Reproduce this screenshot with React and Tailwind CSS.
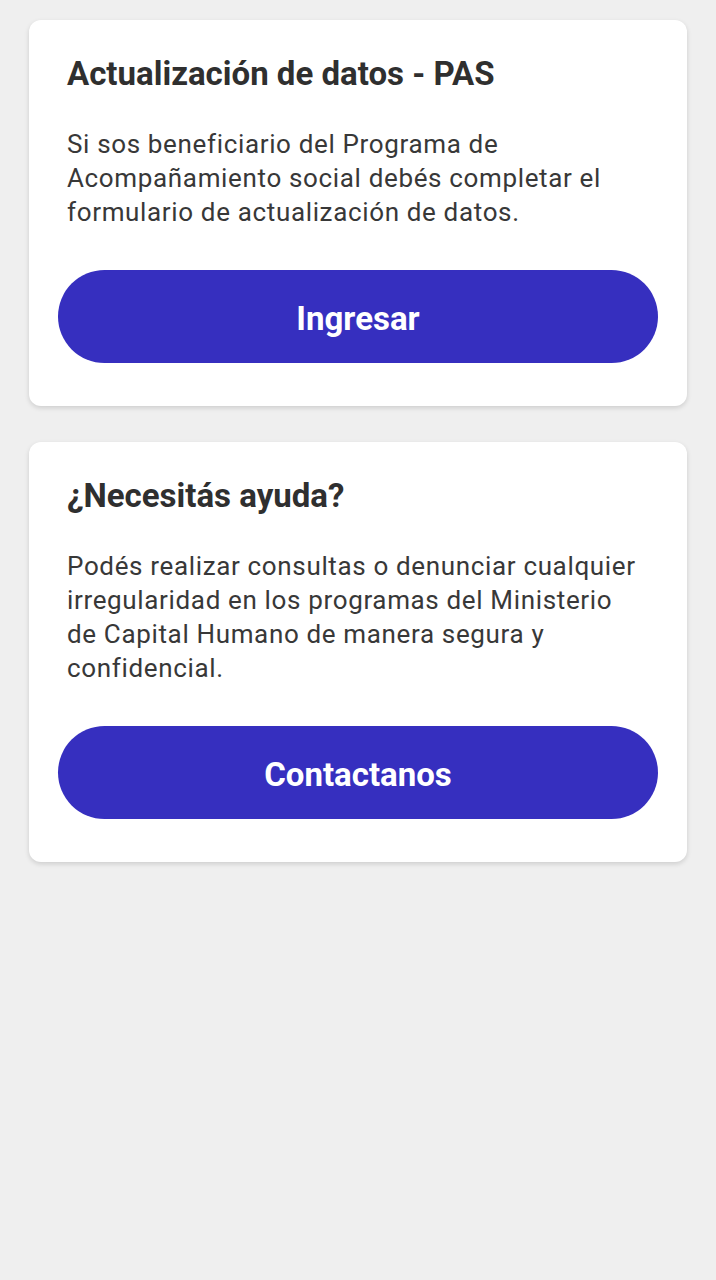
import React from 'react';

const cards = [
  {
    title: 'Actualización de datos - PAS',
    lines: [
      'Si sos beneficiario del Programa de',
      'Acompañamiento social debés completar el',
      'formulario de actualización de datos.',
    ],
    cta: 'Ingresar',
  },
  {
    title: '¿Necesitás ayuda?',
    lines: [
      'Podés realizar consultas o denunciar cualquier',
      'irregularidad en los programas del Ministerio',
      'de Capital Humano de manera segura y',
      'confidencial.',
    ],
    cta: 'Contactanos',
  },
];

function InfoCard({ title, lines, cta }) {
  return (
    <div className="bg-white rounded-[12px] shadow-[0_2px_5px_rgba(0,0,0,0.14)] pt-[34px] pb-[43px] px-[29px]">
      <h2 className="px-[9px] text-[33px] leading-[40px] font-bold text-[#2f2f2f]">{title}</h2>
      <p className="mt-[33px] px-[9px] text-[26px] leading-[34px] text-[#383838] tracking-[0.65px]">
        {lines.map((l, i) => (
          <span key={i} className="block whitespace-nowrap">{l}</span>
        ))}
      </p>
      <button className="mt-[41px] w-full h-[93px] pt-[4px] rounded-full bg-[#362fbf] text-white text-[33px] font-bold">
        {cta}
      </button>
    </div>
  );
}

export default function App() {
  return (
    <div className="min-h-[1280px] bg-[#efefef] px-[29px] pt-[20px] flex flex-col gap-[36px]" style={{ fontFamily: 'Roboto, "Liberation Sans", sans-serif' }}>
      {cards.map(c => (
        <InfoCard key={c.title} {...c} />
      ))}
    </div>
  );
}
